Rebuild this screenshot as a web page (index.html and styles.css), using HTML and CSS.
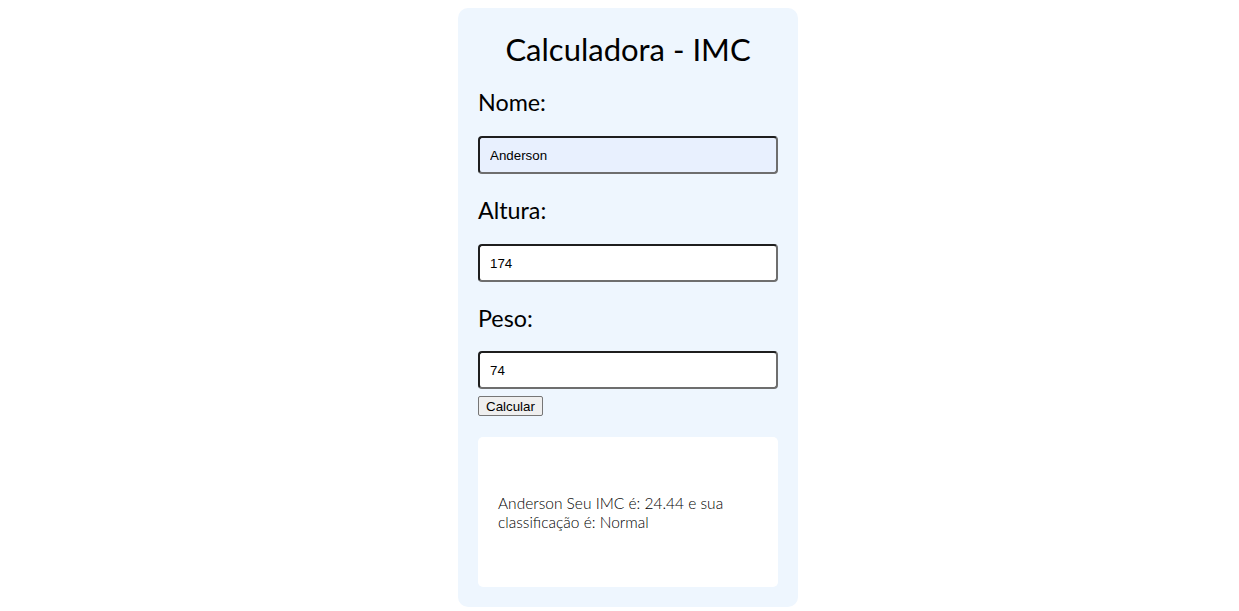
FILE: index.html
```html
<!DOCTYPE html>
<html lang="pt-BR">
<head>
<meta charset="utf-8">
<title>Calculadora - IMC</title>
<link rel="stylesheet" href="styles.css">
</head>
<body>
  <main class="calc">
    <h1 class="calc-title">Calculadora - IMC</h1>
    <label class="field-label" for="nome">Nome:</label>
    <input class="field-input field-input--filled" id="nome" type="text" value="Anderson">
    <label class="field-label" for="altura">Altura:</label>
    <input class="field-input" id="altura" type="text" value="174">
    <label class="field-label field-label--last" for="peso">Peso:</label>
    <input class="field-input field-input--last" id="peso" type="text" value="74">
    <div class="actions"><button class="calc-btn" type="button">Calcular</button></div>
    <div class="result">
      <p class="result-text">Anderson Seu IMC é: 24.44 e sua classificação é: Normal</p>
    </div>
  </main>
</body>
</html>
```
FILE: styles.css
```css
body {
  margin: 8px 0 8px 17px;
  background: #ffffff;
  font-family: "Lato", "Liberation Sans", sans-serif;
}

.calc {
  width: 340px;
  margin: 0 auto;
  box-sizing: border-box;
  padding: 22px 20px 20px;
  background: #eef6fe;
  border-radius: 10px;
  display: flex;
  flex-direction: column;
}

.calc-title {
  margin: 0;
  font-size: 31px;
  font-weight: 400;
  line-height: 38px;
  text-align: center;
  color: #000;
}

.field-label {
  display: block;
  margin-top: 20px;
  font-size: 23.3px;
  line-height: 29px;
  color: #000;
}

.field-input + .field-label {
  margin-top: 22px;
}

.field-input {
  display: block;
  margin-top: 19px;
  height: 38px;
  width: 300px;
  box-sizing: border-box;
  padding: 0 10px;
  border-style: solid;
  border-width: 2px;
  border-color: #1e1e1e #6e6e6e #6e6e6e #1e1e1e;
  border-radius: 4px;
  background: #ffffff;
  font-family: "Liberation Sans", Arial, sans-serif;
  font-size: 13.33px;
  color: #000;
  outline: none;
}

.field-input--filled {
  background: #e8f0fe;
}

.field-input--last {
  margin-top: 18px;
}

.actions {
  margin-top: 7px;
  display: flex;
}

.calc-btn {
  height: 20px;
  padding: 0 7px;
  font-family: "Liberation Sans", Arial, sans-serif;
  font-size: 13.33px;
  color: #000;
  background: #efefef;
  border: 1px solid #767676;
  border-radius: 2px;
}

.result {
  margin-top: 21px;
  height: 150px;
  box-sizing: border-box;
  padding: 0 20px;
  background: #ffffff;
  border-radius: 5px;
  display: flex;
  align-items: center;
}

.result-text {
  margin: 0;
  padding-top: 1px;
  font-size: 15.5px;
  font-weight: 300;
  line-height: 19px;
  color: #000;
}
```
